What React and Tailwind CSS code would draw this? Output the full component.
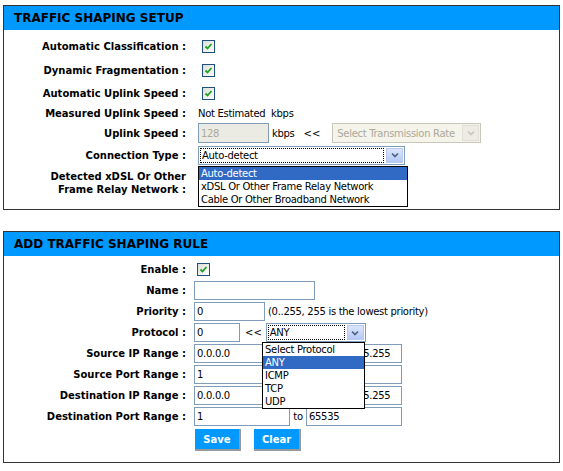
const font = { fontFamily: '"DejaVu Sans", Tahoma, sans-serif' };

function Check() {
  return (
    <span className="inline-flex w-[13px] h-[13px] items-center justify-center border border-[#1c5180] bg-gradient-to-br from-[#dcdcd7] to-white">
      <svg width="9" height="9" viewBox="0 0 9 9">
        <path d="M1.5 4.5 L3.5 6.5 L7.5 2" fill="none" stroke="#21a121" strokeWidth="1.8" />
      </svg>
    </span>
  );
}

function Arrow({ disabled }) {
  return (
    <span
      className={`flex w-[17px] h-full items-center justify-center border ${
        disabled ? "border-[#e0ded6] bg-[#ecebe6]" : "border-[#b9c9ef] bg-gradient-to-b from-[#dbe6fd] to-[#b6c9f5]"
      }`}
    >
      <svg width="8" height="6" viewBox="0 0 8 6">
        <path d="M1 1.5 L4 4.5 L7 1.5" fill="none" stroke={disabled ? "#c9c7ba" : "#4d6185"} strokeWidth="1.7" />
      </svg>
    </span>
  );
}

function Label({ children, w }) {
  return (
    <div className={`${w} shrink-0 text-right font-bold text-[10px] leading-[13px] text-black`}>
      {children}
    </div>
  );
}

function Input({ w, value, disabled }) {
  return (
    <div
      className={`${w} h-[19px] border border-[#7f9db9] px-[2px] flex items-center text-[10px] tracking-[-0.3px] overflow-hidden whitespace-nowrap ${
        disabled ? "bg-[#ebebe4] text-[#aca899]" : "bg-white text-black"
      }`}
    >
      {value}
    </div>
  );
}

function Header({ title }) {
  return (
    <div className="h-[24px] bg-[#0099ff] pl-[10px] flex items-center font-bold text-[12px] text-black">
      {title}
    </div>
  );
}

function Row({ h, label, lw, gap, children }) {
  return (
    <div className={`flex items-center ${h}`}>
      <Label w={lw}>{label}</Label>
      <div className={`flex items-center ${gap} relative`}>{children}</div>
    </div>
  );
}

export default function App() {
  const lw = "w-[182px]";
  return (
    <div className="w-[563px] h-[471px] bg-white pt-[5px] pl-[3px]" style={font}>
      {/* Traffic Shaping Setup */}
      <div className="w-[557px] border border-[#333]">
        <Header title="TRAFFIC SHAPING SETUP" />
        <div className="pt-[4px] pb-[9px]">
          <Row h="h-[24px]" label="Automatic Classification :" lw={lw} gap="pl-[16px]">
            <Check />
          </Row>
          <Row h="h-[24px]" label="Dynamic Fragmentation :" lw={lw} gap="pl-[16px]">
            <Check />
          </Row>
          <Row h="h-[22px]" label="Automatic Uplink Speed :" lw={lw} gap="pl-[16px]">
            <Check />
          </Row>
          <Row h="h-[18px]" label="Measured Uplink Speed :" lw={lw} gap="pl-[12px]">
            <span className="text-[10px] tracking-[-0.3px]">Not Estimated&nbsp; kbps</span>
          </Row>
          <Row h="h-[22px]" label="Uplink Speed :" lw={lw} gap="pl-[12px]">
            <Input w="w-[71px] h-[20px]" value="128" disabled />
            <span className="text-[10px] tracking-[-0.3px] ml-[3px]">kbps</span>
            <span className="text-[10px] ml-[9px]">&lt;&lt;</span>
            <div className="ml-[12px] w-[149px] h-[20px] border border-[#c9c7ba] bg-[#f5f4ea] flex items-center pl-[4px] pr-[1px] py-[1px] text-[10px] tracking-[-0.3px] text-[#aca899]">
              <span className="flex-1 truncate">Select Transmission Rate</span>
              <Arrow disabled />
            </div>
          </Row>
          <Row h="h-[22px]" label="Connection Type :" lw={lw} gap="pl-[12px]">
            <div className="w-[207px] h-[19px] border border-[#7f9db9] bg-white flex items-center p-[1px] text-[10px] tracking-[-0.3px]">
              <span className="flex-1 h-full border border-dotted border-black flex items-center pl-[1px] mr-[2px]">
                Auto-detect
              </span>
              <Arrow />
            </div>
            <div className="absolute left-[12px] top-[20px] w-[210px] border border-black bg-white text-[10px] tracking-[-0.3px] leading-[13px] z-10">
              <div className="bg-[#316ac5] text-white pl-[2px] h-[13px]">Auto-detect</div>
              <div className="pl-[2px] h-[13px]">xDSL Or Other Frame Relay Network</div>
              <div className="pl-[2px] h-[13px]">Cable Or Other Broadband Network</div>
            </div>
          </Row>
          <Row h="h-[34px]" label={<>Detected xDSL Or Other<br />Frame Relay Network :</>} lw={lw} gap="pl-[12px]">
            <span />
          </Row>
        </div>
      </div>

      {/* Add Traffic Shaping Rule */}
      <div className="w-[557px] border border-[#333] mt-[21px]">
        <Header title="ADD TRAFFIC SHAPING RULE" />
        <div className="pt-[3px] pb-[11px]">
          <Row h="h-[21px]" label="Enable :" lw={lw} gap="pl-[11px]">
            <Check />
          </Row>
          <Row h="h-[21px]" label="Name :" lw={lw} gap="pl-[8px]">
            <Input w="w-[121px]" value="" />
          </Row>
          <Row h="h-[21px]" label="Priority :" lw={lw} gap="pl-[8px]">
            <Input w="w-[71px]" value="0" />
            <span className="text-[10px] tracking-[-0.3px] ml-[3px]">(0..255, 255 is the lowest priority)</span>
          </Row>
          <Row h="h-[21px]" label="Protocol :" lw={lw} gap="pl-[8px]">
            <Input w="w-[46px]" value="0" />
            <span className="text-[10px] ml-[5px] mr-[4px]">&lt;&lt;</span>
            <div className="w-[100px] h-[19px] border border-[#7f9db9] bg-white flex items-center p-[1px] text-[10px] tracking-[-0.3px]">
              <span className="flex-1 h-full border border-dotted border-black flex items-center pl-[1px] mr-[2px]">
                ANY
              </span>
              <Arrow />
            </div>
            <div className="absolute left-[76px] top-[19px] w-[103px] border border-black bg-white text-[10px] tracking-[-0.3px] leading-[13px] z-10">
              <div className="pl-[2px] h-[13px]">Select Protocol</div>
              <div className="bg-[#316ac5] text-white pl-[2px] h-[13px]">ANY</div>
              <div className="pl-[2px] h-[13px]">ICMP</div>
              <div className="pl-[2px] h-[13px]">TCP</div>
              <div className="pl-[2px] h-[13px]">UDP</div>
            </div>
          </Row>
          {[
            ["Source IP Range :", "0.0.0.0", "255.255.255.255"],
            ["Source Port Range :", "1", "65535"],
            ["Destination IP Range :", "0.0.0.0", "255.255.255.255"],
            ["Destination Port Range :", "1", "65535"],
          ].map(([label, from, to]) => (
            <Row key={label} h="h-[21px]" label={label} lw={lw} gap="pl-[8px]">
              <Input w="w-[96px]" value={from} />
              <span className="w-[16px] text-center text-[10px] tracking-[-0.3px]">to</span>
              <Input w="w-[96px]" value={to} />
            </Row>
          ))}
          <div className="flex pl-[191px] pt-[2px] gap-[13px]">
            <button className="w-[46px] h-[22px] bg-[#0099ff] text-white font-bold text-[10px] border-r-2 border-b-2 border-[#999]">
              Save
            </button>
            <button className="w-[47px] h-[22px] bg-[#0099ff] text-white font-bold text-[10px] border-r-2 border-b-2 border-[#999]">
              Clear
            </button>
          </div>
        </div>
      </div>
    </div>
  );
}
